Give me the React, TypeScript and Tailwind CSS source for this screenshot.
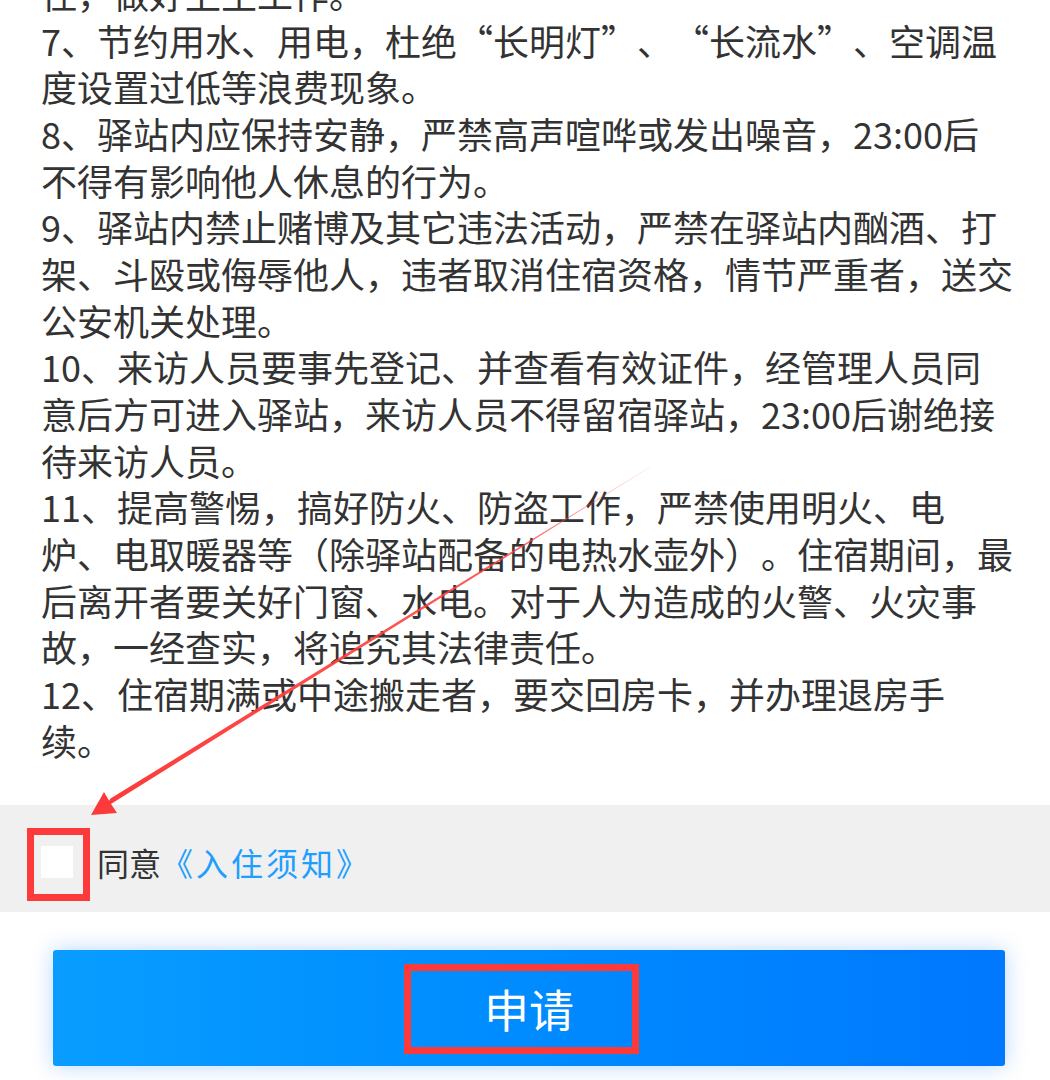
import React from "react";

const rules: string[] = [
  "住，做好卫生工作。",
  "7、节约用水、用电，杜绝“长明灯”、“长流水”、空调温度设置过低等浪费现象。",
  "8、驿站内应保持安静，严禁高声喧哗或发出噪音，23:00后不得有影响他人休息的行为。",
  "9、驿站内禁止赌博及其它违法活动，严禁在驿站内酗酒、打架、斗殴或侮辱他人，违者取消住宿资格，情节严重者，送交公安机关处理。",
  "10、来访人员要事先登记、并查看有效证件，经管理人员同意后方可进入驿站，来访人员不得留宿驿站，23:00后谢绝接待来访人员。",
  "11、提高警惕，搞好防火、防盗工作，严禁使用明火、电炉、电取暖器等（除驿站配备的电热水壶外）。住宿期间，最后离开者要关好门窗、水电。对于人为造成的火警、火灾事故，一经查实，将追究其法律责任。",
  "12、住宿期满或中途搬走者，要交回房卡，并办理退房手续。",
];

function Arrow() {
  // tapered red annotation arrow pointing at the checkbox
  return (
    <svg
      className="pointer-events-none absolute left-0 top-0"
      width="1050"
      height="1080"
      viewBox="0 0 1050 1080"
    >
      <defs>
        <linearGradient id="shaft" x1="650" y1="467" x2="105" y2="805" gradientUnits="userSpaceOnUse">
          <stop offset="0" stopColor="#ff4545" stopOpacity="0.15" />
          <stop offset="0.25" stopColor="#ff4040" stopOpacity="0.85" />
          <stop offset="1" stopColor="#fd3a3a" />
        </linearGradient>
      </defs>
      <polygon points="650.3,466.6 649.7,467.4 104.5,808 110.5,798.5" fill="url(#shaft)" />
      <polygon points="91,815 117,813 111,804 104,792" fill="#fd3a3a" />
    </svg>
  );
}

export default function App() {
  return (
    <div
      className="relative h-[1080px] w-[1050px] overflow-hidden bg-white [text-spacing-trim:space-all]"
      style={{ fontFamily: '"Noto Sans CJK SC", "Noto Sans", sans-serif' }}
    >
      <div className="-mt-[30px] pl-[41px] pr-[36px] text-[36px] leading-[46.67px] text-[#333333]">
        {rules.map((r, i) => (
          <p key={i}>{r}</p>
        ))}
      </div>

      <div className="mt-[41.7px] flex h-[107px] items-center bg-[#f0f0f0] pl-[41px] pt-[7px]">
        <div className="relative h-[32px] w-[32px] bg-white">
          <div className="absolute -left-[14px] -top-[18px] h-[73px] w-[63px] border-[7px] border-[#fd3a3a]" />
        </div>
        <span className="ml-[24px] text-[32px] leading-none text-[#333333]">
          同意<span className="tracking-[3px] text-[#1e9fff]">《入住须知》</span>
        </span>
      </div>

      <div className="mt-[38px] px-[45px]">
        <button className="relative ml-[8px] flex h-[116px] w-[952px] items-center justify-center rounded-[3px] bg-gradient-to-r from-[#0a9dff] to-[#0078ff] shadow-[0_0_22px_rgba(0,110,255,0.28)]">
          <span className="text-[45px] leading-none text-white">申请</span>
          <span className="absolute left-[351px] top-[14px] h-[90px] w-[235px] border-[7px] border-[#fd3a3a]" />
        </button>
      </div>

      <Arrow />
    </div>
  );
}
